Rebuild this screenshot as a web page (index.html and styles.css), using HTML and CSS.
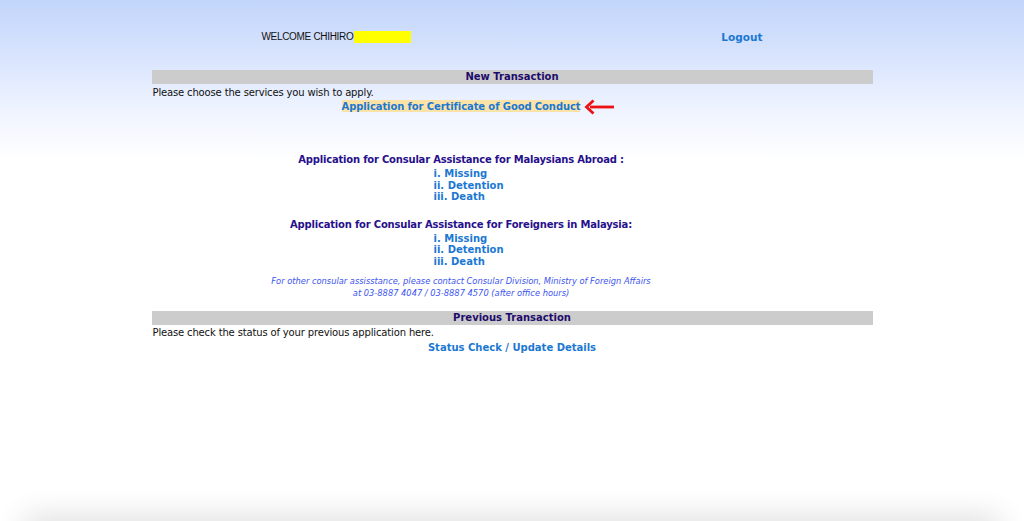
FILE: index.html
```html
<!DOCTYPE html>
<html lang="en">
<head>
    <meta charset="UTF-8">
    <title>Online Application</title>
    <link rel="stylesheet" href="styles.css">
</head>
<body>

<div class="page">
    <div class="topbar">
        <div class="welcome">WELCOME CHIHIRO<span class="name-mask"></span></div>
        <a href="#" class="logout">Logout</a>
    </div>

    <div class="section-bar">New Transaction</div>
    <p class="note">Please choose the services you wish to apply.</p>

    <div class="services">
        <div class="service-row">
            <span class="marked">
                <a href="#" class="link highlighted">Application for Certificate of Good Conduct</a>
                <svg class="pointer" width="31" height="16" viewBox="0 0 31 16">
                    <path d="M30 8 H6" stroke="#ee1111" stroke-width="2.8"/>
                    <path d="M9.5 1.5 L2.5 8 L9.5 14.5" fill="none" stroke="#ee1111" stroke-width="2.8"/>
                </svg>
            </span>
        </div>

        <h3 class="group-title first">Application for Consular Assistance for Malaysians Abroad :</h3>
        <ul class="case-list">
            <li><a href="#" class="link">i. Missing</a></li>
            <li><a href="#" class="link">ii. Detention</a></li>
            <li><a href="#" class="link">iii. Death</a></li>
        </ul>

        <h3 class="group-title">Application for Consular Assistance for Foreigners in Malaysia:</h3>
        <ul class="case-list">
            <li><a href="#" class="link">i. Missing</a></li>
            <li><a href="#" class="link">ii. Detention</a></li>
            <li><a href="#" class="link">iii. Death</a></li>
        </ul>

        <p class="contact">For other consular assisstance, please contact Consular Division, Ministry of Foreign Affairs<br>
            at 03-8887 4047 / 03-8887 4570 (after office hours)</p>
    </div>

    <div class="section-bar prev">Previous Transaction</div>
    <p class="note tight">Please check the status of your previous application here.</p>
    <div class="status-row">
        <a href="#" class="link">Status Check / Update Details</a>
    </div>
</div>

<div class="window-edge"></div>

</body>
</html>
```

FILE: styles.css
```css
/* --- Page --- */
html, body {
    height: 100%;
}

body {
    margin: 0;
    font-family: "DejaVu Sans", Verdana, sans-serif;
    font-size: 10px;
    color: #111;
    background: linear-gradient(#c2d5fb 0, #dae5fd 60px, #f2f6ff 120px, #ffffff 160px) no-repeat;
    background-color: #fff;
    overflow: hidden;
}

.page {
    width: 721px;
    margin: 0 auto;
}

a {
    text-decoration: none;
}

/* --- Top bar --- */
.topbar {
    display: flex;
    align-items: center;
    padding-top: 31px;
    height: 12px;
    line-height: 12px;
}

.welcome {
    font-family: "Liberation Sans", Arial, sans-serif;
    font-size: 10px;
    letter-spacing: -0.32px;
    color: #111;
    margin-left: 110px;
    display: flex;
    align-items: center;
}

.name-mask {
    display: inline-block;
    width: 57px;
    height: 12px;
    background: #ffff00;
    margin-left: 1px;
}

.logout {
    margin-left: auto;
    margin-right: 110px;
    font-weight: bold;
    font-size: 10.5px;
    color: #1b78d2;
}

/* --- Section bars --- */
.section-bar {
    margin-top: 27px;
    height: 14px;
    line-height: 14px;
    background: #cccccc;
    text-align: center;
    font-weight: bold;
    color: #1d0b6b;
}

.section-bar.prev {
    margin-top: 12px;
}

.note {
    margin: 2px 0 0 1px;
    line-height: 14px;
    letter-spacing: -0.15px;
    color: #111;
}

.note.tight {
    margin-top: 1px;
}

/* --- Services --- */
.services {
    width: 619px;
    text-align: center;
}

.link {
    font-weight: bold;
    color: #1b78d2;
}

.service-row {
    line-height: 14px;
    height: 14px;
}

.marked {
    position: relative;
}

.highlighted {
    background: #fbe3a8;
    padding: 1px 0 0;
    letter-spacing: -0.1px;
}

/* red arrow pointing at the link */
.pointer {
    position: absolute;
    left: 100%;
    top: -2px;
    margin-left: 4px;
}

.group-title {
    margin: 15px 0 0;
    font-size: 10px;
    line-height: 14px;
    letter-spacing: -0.2px;
    color: #27108c;
}

.group-title.first {
    margin-top: 39px;
}

.case-list {
    list-style: none;
    margin: 1px 0 0;
    padding: 0 0 0 282px;
    text-align: left;
    line-height: 11.5px;
}

.contact {
    margin: 8px 0 0;
    font-style: italic;
    font-size: 8.3px;
    line-height: 12px;
    color: #3c55f0;
}

/* --- Previous transaction --- */
.status-row {
    margin-top: 1px;
    line-height: 14px;
    text-align: center;
}

/* --- Bottom window shadow --- */
.window-edge {
    position: fixed;
    left: 30px;
    right: 30px;
    top: 100%;
    height: 40px;
    box-shadow: 0 0 30px 6px rgba(0, 0, 0, 0.12);
}
```
